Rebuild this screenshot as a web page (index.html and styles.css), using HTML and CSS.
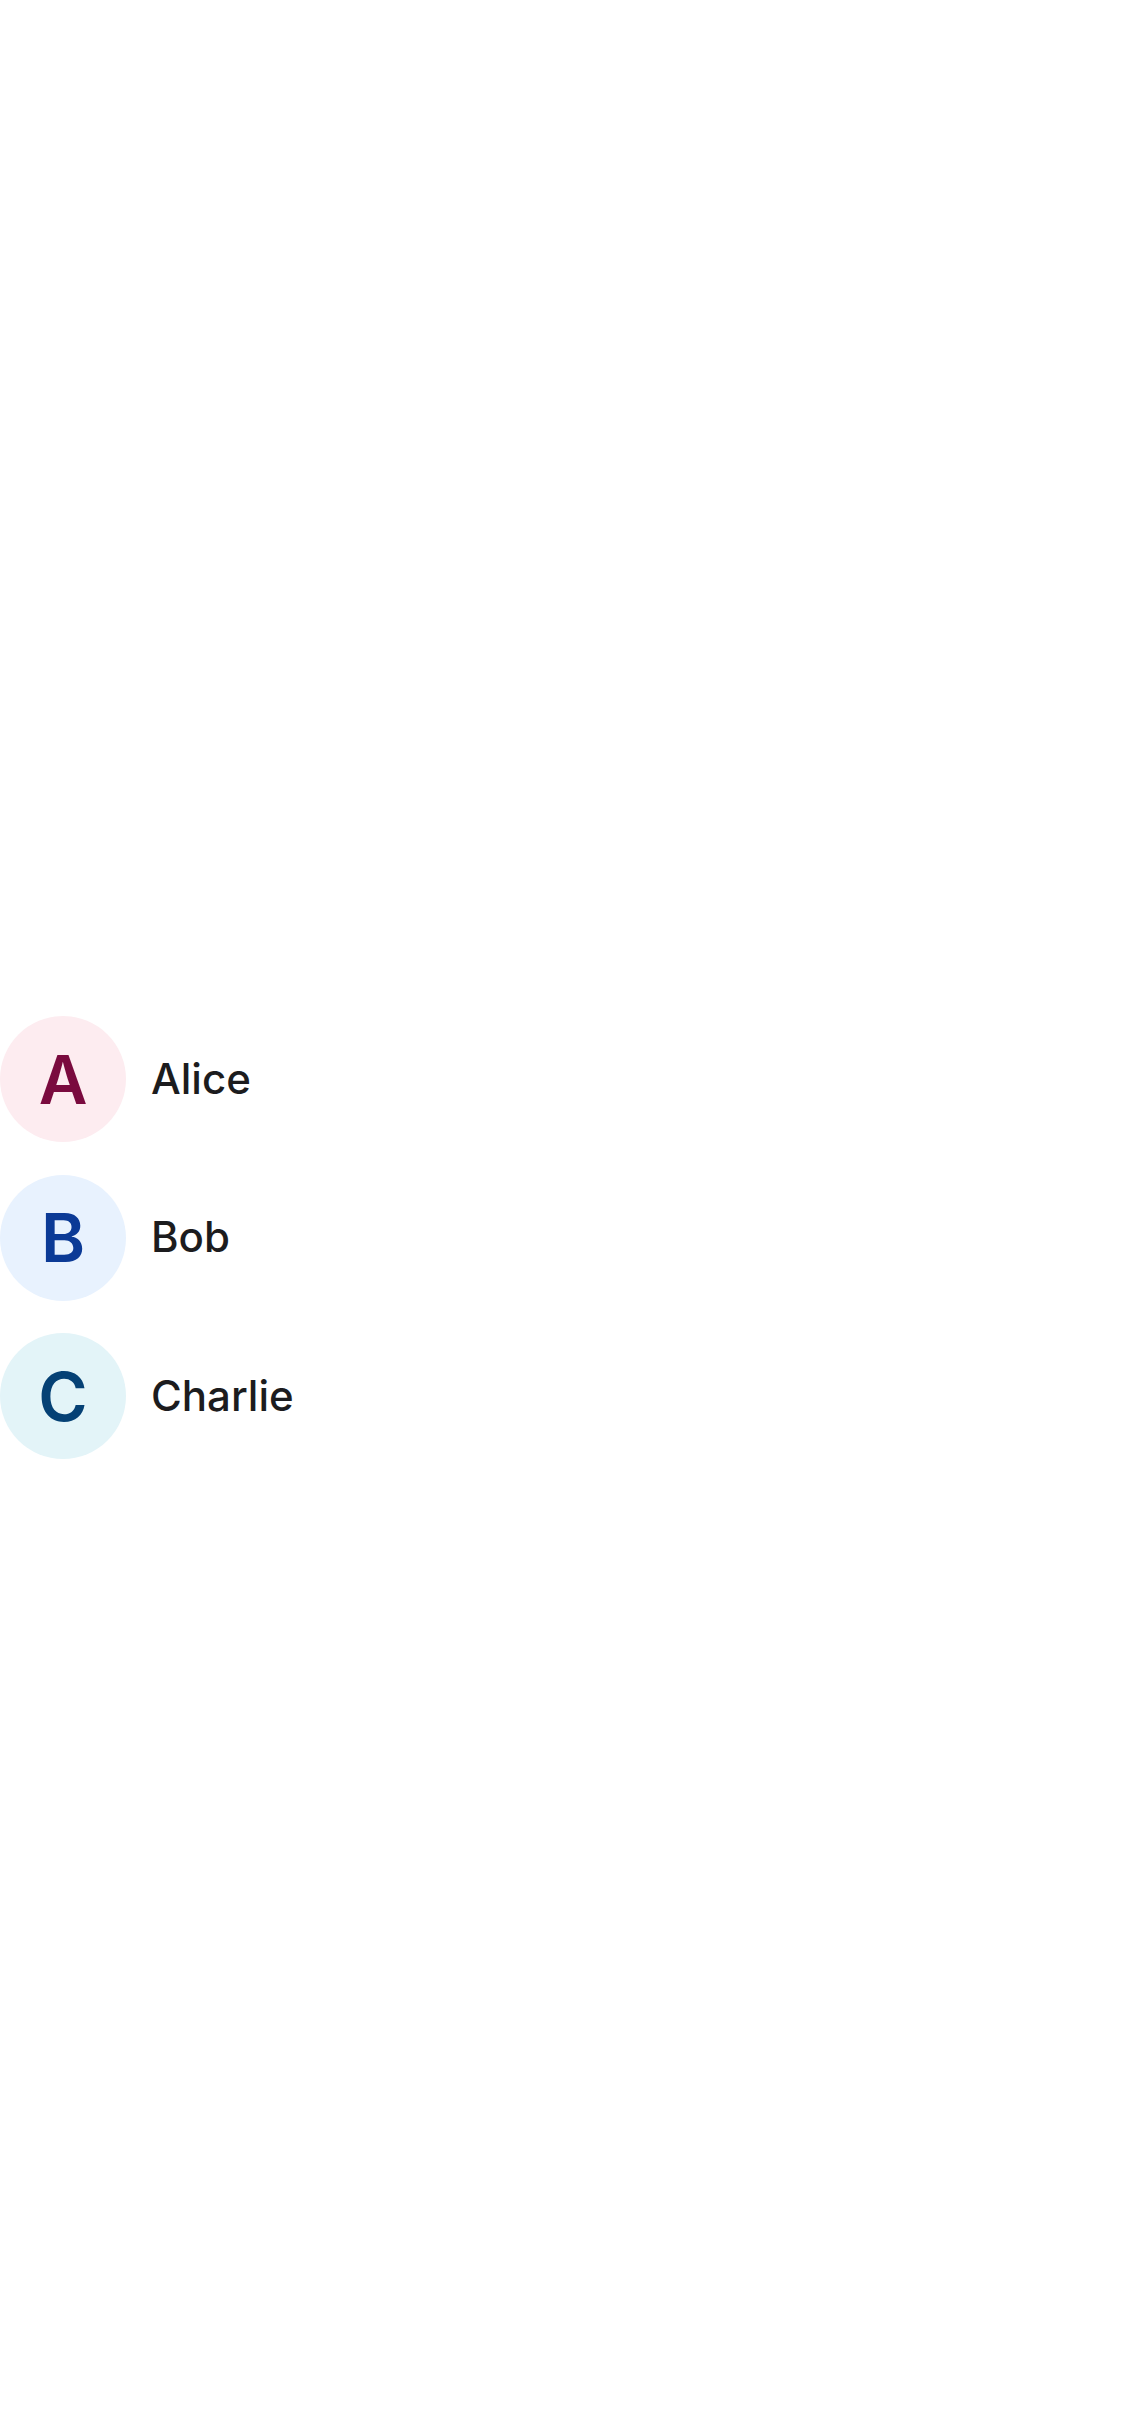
FILE: index.html
```html
<!DOCTYPE html>
<html lang="en">
<head>
<meta charset="utf-8">
<title>Contacts</title>
<link rel="stylesheet" href="styles.css">
</head>
<body>
<main class="page">
  <ul class="list">
    <li class="row">
      <div class="avatar avatar-pink">A</div>
      <span class="name">Alice</span>
    </li>
    <li class="row">
      <div class="avatar avatar-blue">B</div>
      <span class="name">Bob</span>
    </li>
    <li class="row">
      <div class="avatar avatar-cyan">C</div>
      <span class="name">Charlie</span>
    </li>
  </ul>
</main>
</body>
</html>
```
FILE: styles.css
```css
html, body {
  margin: 0;
  padding: 0;
  background: #ffffff;
}
body {
  width: 1125px;
  height: 2436px;
  font-family: Inter, "Noto Sans", sans-serif;
  color: #1c1c1e;
}
.page {
  padding-top: 1016px;
}
.list {
  list-style: none;
  margin: 0;
  padding: 0;
  display: flex;
  flex-direction: column;
  gap: 32.5px;
}
.row {
  display: flex;
  align-items: center;
  gap: 25px;
  height: 126px;
}
.avatar {
  width: 126px;
  height: 126px;
  border-radius: 50%;
  display: flex;
  align-items: center;
  justify-content: center;
  font-size: 67px;
  font-weight: 600;
  line-height: 1;
  flex: none;
}
.avatar-pink {
  background: #fdecf0;
  color: #7a0a3e;
}
.avatar-blue {
  background: #e8f2fe;
  color: #0b3a96;
}
.avatar-cyan {
  background: #e3f4f8;
  color: #054175;
}
.name {
  font-size: 42px;
  font-weight: 500;
  color: #1c1c1e;
  margin-top: -2px;
}
```
